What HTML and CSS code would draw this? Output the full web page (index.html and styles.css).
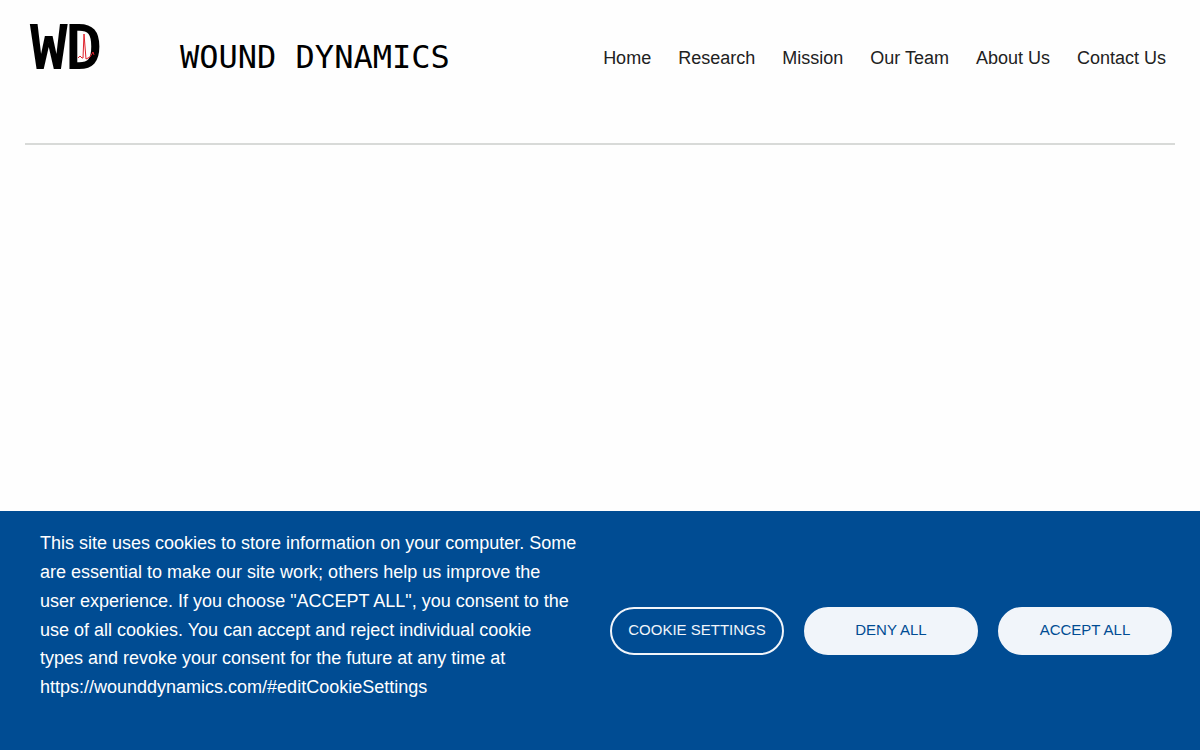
FILE: index.html
```html
<!DOCTYPE html>
<html lang="en">
<head>
  <meta charset="utf-8">
  <meta name="viewport" content="width=device-width, initial-scale=1.0">
  <title>Wound Dynamics</title>
  <link rel="stylesheet" href="styles.css">
</head>
<body>

  <header class="site-header">
    <a class="brand" href="#home">
      <svg class="logo" viewBox="0 0 80 60" role="img" aria-label="WD logo">
        <text class="logo-text" x="1" y="46">WD</text>
        <path class="pulse" d="M48 36 l2 -2 l2 2 l1 0 l1 -24 l2 25 l2 -1 l2 -1 l3 -5 l1 3"/>
      </svg>
      <span class="brand-name">WOUND DYNAMICS</span>
    </a>
    <nav class="site-nav" aria-label="Main">
      <a href="#home">Home</a>
      <a href="#research">Research</a>
      <a href="#mission">Mission</a>
      <a href="#team">Our Team</a>
      <a href="#about">About Us</a>
      <a href="#contact">Contact Us</a>
    </nav>
  </header>

  <main></main>

  <!-- Cookie banner -->
  <section class="cookie-banner" aria-label="Cookie consent">
    <p class="cookie-text">This site uses cookies to store information on your computer. Some are essential to make our site work; others help us improve the user experience. If you choose "ACCEPT ALL", you consent to the use of all cookies. You can accept and reject individual cookie types and revoke your consent for the future at any time at https://wounddynamics.com/#editCookieSettings</p>
    <div class="cookie-actions">
      <button class="btn btn-outline" type="button">COOKIE SETTINGS</button>
      <button class="btn" type="button">DENY ALL</button>
      <button class="btn" type="button">ACCEPT ALL</button>
    </div>
  </section>

</body>
</html>
```

FILE: styles.css
```css
* { box-sizing: border-box; }
body { display: flex; flex-direction: column; min-height: 100vh; margin: 0; background: #fefefe; color: #212121; font-family: "Liberation Sans", Arial, sans-serif; font-size: 18px; line-height: 1.6; }
main { flex: 1; }

.site-header { display: flex; justify-content: space-between; align-items: flex-start; margin: 0 25px; padding: 22px 9px 61px 5px; border-bottom: 2px solid #d8dad8; }
.brand { display: flex; align-items: flex-start; gap: 70px; color: #000; text-decoration: none; }
.logo { width: 80px; height: 60px; overflow: visible; }
.logo-text { font-family: "DejaVu Sans Mono", monospace; font-size: 59px; stroke: #000; stroke-width: 2; }
.pulse { fill: none; stroke: #e0202a; stroke-width: 1; stroke-linejoin: round; }
.brand-name { padding-top: 15px; font-family: "DejaVu Sans Mono", monospace; font-size: 32px; line-height: 40px; white-space: nowrap; }
.site-nav { display: flex; gap: 27px; padding-top: 22px; }
.site-nav a { color: inherit; text-decoration: none; white-space: nowrap; }
.site-nav a:hover { text-decoration: underline; }

.cookie-banner { display: flex; align-items: center; gap: 32px; padding: 17px 28px 17px 40px; background: #004c93; color: #fff; }
.cookie-text { flex: 1; margin: 0; padding: 1px 0 31px; }
.cookie-actions { display: flex; gap: 20px; }
.btn { width: 174px; height: 48px; padding: 0 8px 2px; border: 2px solid #f1f5fa; border-radius: 24px; background: #f1f5fa; color: #004c93; font-family: inherit; font-size: 15px; cursor: pointer; }
.btn-outline { background: transparent; color: #f1f5fa; }
```
